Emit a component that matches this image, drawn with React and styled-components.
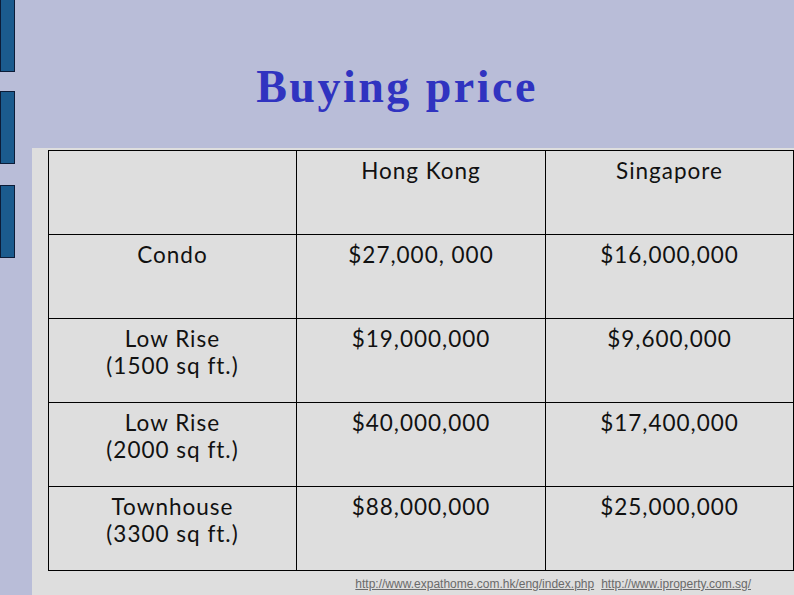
import React from 'react';
import styled, { createGlobalStyle } from 'styled-components';

const GlobalStyle = createGlobalStyle`
    body {
        margin: 0;
        background: #b9bdd8;
    }
`;

const Page = styled.div`
    display: flex;
    flex-direction: row;
    width: 794px;
    height: 595px;
    overflow: hidden;
    background: #b9bdd8;
`;

const Sidebar = styled.div`
    width: 32px;
    flex-shrink: 0;
    display: flex;
    flex-direction: column;
`;

const Bar = styled.div`
    width: 13px;
    height: ${props => props.height}px;
    margin-top: ${props => props.offset}px;
    background: #1b5b8e;
    border: 1px solid #0c1c38;
`;

const Main = styled.div`
    flex: 1;
    display: flex;
    flex-direction: column;
`;

const Title = styled.h1`
    margin: 0;
    height: 148px;
    box-sizing: border-box;
    padding: 64px 32px 0 0;
    text-align: center;
    font-family: "Liberation Serif", "Times New Roman", serif;
    font-weight: bold;
    font-size: 46px;
    line-height: 46px;
    letter-spacing: 2.5px;
    color: #3033c0;
`;

const Panel = styled.div`
    flex: 1;
    background: #dedede;
    padding: 2px 0 0 16px;
`;

const Table = styled.table`
    width: 746px;
    border-collapse: collapse;
    table-layout: fixed;
    font-family: Lato, "Open Sans", sans-serif;
    font-size: 22.5px;
    line-height: 27px;
    letter-spacing: 1px;
    color: #111;

    td {
        border: 1px solid #000;
        height: 84px;
        box-sizing: border-box;
        vertical-align: top;
        text-align: center;
        padding: 6px 4px 0;
    }
`;

const Sources = styled.div`
    display: flex;
    justify-content: flex-end;
    gap: 7px;
    padding: 6px 43px 0 0;
    font-family: "Liberation Sans", Arial, sans-serif;
    font-size: 12px;
    line-height: 14px;

    a {
        color: #6a6a6a;
        text-decoration: underline;
    }
`;

const rows = [
    { label: ['Condo'], hk: '$27,000, 000', sg: '$16,000,000' },
    { label: ['Low Rise', '(1500 sq ft.)'], hk: '$19,000,000', sg: '$9,600,000' },
    { label: ['Low Rise', '(2000 sq ft.)'], hk: '$40,000,000', sg: '$17,400,000' },
    { label: ['Townhouse', '(3300 sq ft.)'], hk: '$88,000,000', sg: '$25,000,000' },
];

export default function App() {
    return (
        <Page>
            <GlobalStyle />
            <Sidebar>
                <Bar height={71} offset={-1} />
                <Bar height={71} offset={19} />
                <Bar height={71} offset={21} />
            </Sidebar>
            <Main>
                <Title>Buying price</Title>
                <Panel>
                    <Table>
                        <colgroup>
                            <col style={{ width: 248 }} />
                            <col style={{ width: 249 }} />
                            <col />
                        </colgroup>
                        <tbody>
                            <tr>
                                <td></td>
                                <td>Hong Kong</td>
                                <td>Singapore</td>
                            </tr>
                            {rows.map((row, i) => (
                                <tr key={i}>
                                    <td>
                                        {row.label.map((line, j) => (
                                            <div key={j}>{line}</div>
                                        ))}
                                    </td>
                                    <td>{row.hk}</td>
                                    <td>{row.sg}</td>
                                </tr>
                            ))}
                        </tbody>
                    </Table>
                    <Sources>
                        <a href="#">http://www.expathome.com.hk/eng/index.php</a>
                        <a href="#">http://www.iproperty.com.sg/</a>
                    </Sources>
                </Panel>
            </Main>
        </Page>
    );
}
